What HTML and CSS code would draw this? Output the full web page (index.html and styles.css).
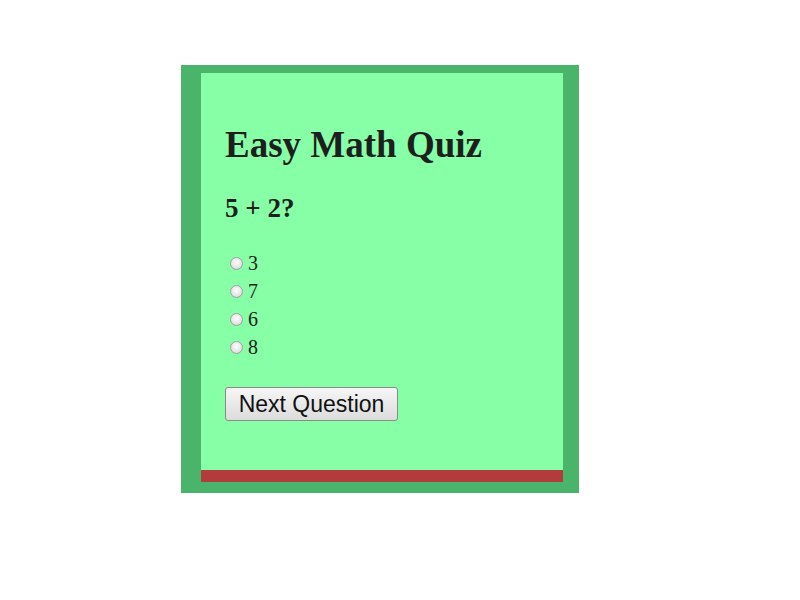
FILE: index.html
```html
<!DOCTYPE html>
<html>
<head>
<meta charset="utf-8">
<link rel="stylesheet" href="styles.css">
</head>
<body>
<div class="outer">
  <div class="inner">
    <h1 class="title">Easy Math Quiz</h1>
    <h2 class="question">5 + 2?</h2>
    <div class="options">
      <label class="option"><input type="radio" name="a" class="radio"><span>3</span></label>
      <label class="option"><input type="radio" name="a" class="radio"><span>7</span></label>
      <label class="option"><input type="radio" name="a" class="radio"><span>6</span></label>
      <label class="option"><input type="radio" name="a" class="radio"><span>8</span></label>
    </div>
    <button class="next">Next Question</button>
  </div>
  <div class="bar"></div>
</div>
</body>
</html>
```
FILE: styles.css
```css
html, body {
  margin: 0;
  padding: 0;
  background: #ffffff;
}
body {
  font-family: "Liberation Serif", "Times New Roman", serif;
  color: #1e1e1e;
}
.outer {
  margin: 65px 0 0 181px;
  width: 398px;
  box-sizing: border-box;
  padding: 8px 16px 11px 20px;
  background: #4ab46a;
}
.inner {
  background: #87ffa7;
  padding: 50px 0 0 24px;
  height: 397px;
  box-sizing: border-box;
}
.title {
  margin: 0;
  font-size: 37px;
  line-height: 44px;
  font-weight: bold;
}
.question {
  margin: 25px 0 0;
  font-size: 27px;
  line-height: 32px;
  font-weight: bold;
}
.options {
  margin-top: 25px;
  display: flex;
  flex-direction: column;
}
.option {
  display: flex;
  align-items: center;
  font-size: 20px;
  line-height: 28px;
  height: 28px;
}
.radio {
  appearance: none;
  -webkit-appearance: none;
  width: 13px;
  height: 13px;
  margin: 0 5px 0 5px;
  border-radius: 50%;
  border: 1px solid #a0a0a0;
  background: radial-gradient(circle at 50% 40%, #ffffff 0%, #e6e6e6 55%, #cdcdcd 100%);
  box-sizing: border-box;
}
.next {
  margin-top: 26px;
  height: 34px;
  width: 173px;
  padding: 0;
  font-family: "Liberation Sans", Arial, sans-serif;
  font-size: 23px;
  color: #111;
  border: 1px solid #8a8a8a;
  border-radius: 3px;
  background: linear-gradient(#f6f6f6, #dcdcdc);
}
.bar {
  height: 12px;
  background: #b23b3b;
}
```
